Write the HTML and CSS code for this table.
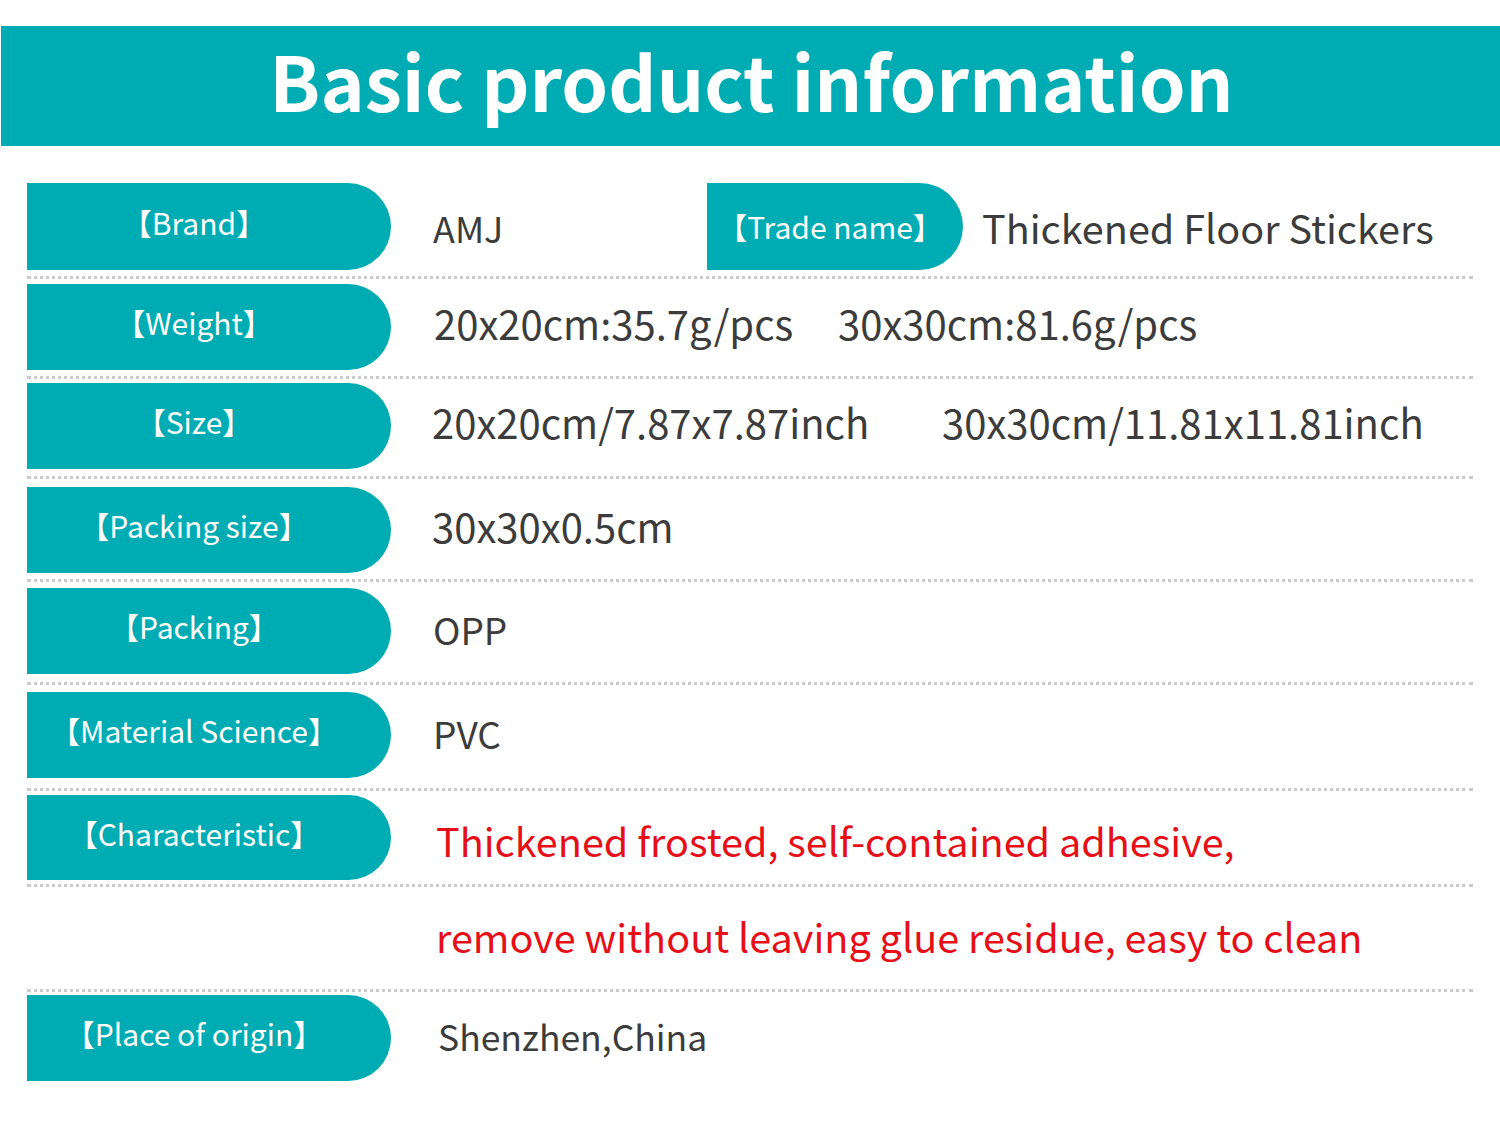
FILE: index.html
```html
<!DOCTYPE html>
<html>
<head>
<meta charset="utf-8">
<link rel="stylesheet" href="styles.css">
</head>
<body>
<header class="banner"><h1 class="title">Basic product information</h1></header>
<main class="table">
  <div class="row row-87">
    <div class="pill">【Brand】</div>
    <div class="val v-amj">AMJ</div>
    <div class="pill pill-trade">【Trade name】</div>
    <div class="val v-trade">Thickened Floor Stickers</div>
  </div>
  <div class="sep sep-1"></div>
  <div class="row">
    <div class="pill">【Weight】</div>
    <div class="val v-w1">20x20cm:35.7g/pcs</div>
    <div class="val v-w2">30x30cm:81.6g/pcs</div>
  </div>
  <div class="sep sep-2"></div>
  <div class="row">
    <div class="pill">【Size】</div>
    <div class="val v-s1">20x20cm/7.87x7.87inch</div>
    <div class="val v-s2">30x30cm/11.81x11.81inch</div>
  </div>
  <div class="sep sep-3"></div>
  <div class="row">
    <div class="pill">【Packing size】</div>
    <div class="val v-ps">30x30x0.5cm</div>
  </div>
  <div class="sep sep-4"></div>
  <div class="row">
    <div class="pill">【Packing】</div>
    <div class="val v-small">OPP</div>
  </div>
  <div class="sep sep-5"></div>
  <div class="row">
    <div class="pill">【Material Science】</div>
    <div class="val v-small">PVC</div>
  </div>
  <div class="sep sep-6"></div>
  <div class="row row-85">
    <div class="pill">【Characteristic】</div>
    <div class="val red">Thickened frosted, self-contained adhesive,</div>
  </div>
  <div class="sep sep-7"></div>
  <div class="row row-text">
    <div class="spacer"></div>
    <div class="val red">remove without leaving glue residue, easy to clean</div>
  </div>
  <div class="sep sep-8"></div>
  <div class="row">
    <div class="pill">【Place of origin】</div>
    <div class="val v-origin">Shenzhen,China</div>
  </div>
</main>
</body>
</html>
```
FILE: styles.css
```css
html, body {
  margin: 0;
  padding: 0;
  background: #ffffff;
  font-family: "Noto Sans CJK SC", "Noto Sans", sans-serif;
}
.banner {
  margin: 26px 0 0 1px;
  height: 120px;
  background: #00acb3;
  display: flex;
  align-items: center;
  justify-content: center;
}
.title {
  margin: 0;
  color: #ffffff;
  font-size: 75px;
  font-weight: 700;
  line-height: 1;
  padding-bottom: 14px;
  padding-left: 2px;
}
.table {
  margin: 37px 27px 0 27px;
  width: 1446px;
}
.row {
  display: flex;
  align-items: center;
  height: 86px;
}
.row .pill { height: 100%; }
.row-87 { height: 87px; }
.row-85 { height: 85px; }
.row-text { height: 100px; }
.spacer { width: 364px; flex: none; }
.sep {
  height: 0;
  border-top: 3px dotted #cbcbcb;
  margin: 6px 0 5px 0;
}
.sep-1 { margin: 6px 0 5px 0; }
.sep-2 { margin: 6px 0 4px 0; }
.sep-3 { margin: 7px 0 8px 0; }
.sep-4 { margin: 6px 0 6px 0; }
.sep-5 { margin: 8px 0 7px 0; }
.sep-6 { margin: 10px 0 4px 0; }
.sep-7 { margin: 4px 0 0 0; }
.sep-8 { margin: 2px 0 3px 0; }
.pill {
  flex: none;
  width: 364px;
  box-sizing: border-box;
  padding-right: 30px;
  background: #00acb3;
  color: #ffffff;
  border-radius: 0 44px 44px 0;
  display: flex;
  align-items: center;
  justify-content: center;
  font-size: 30px;
  padding-bottom: 10px;
}
.pill-trade {
  width: 256px;
  padding-right: 10px;
  padding-bottom: 2px;
}
.val {
  flex: none;
  color: #3c3c3c;
  font-size: 40px;
  margin-left: 42px;
  white-space: nowrap;
  padding-bottom: 9px;
}
.v-amj { font-size: 36px; width: 274px; margin-left: 42px; padding-bottom: 0; }
.v-trade { margin-left: 19px; font-size: 39.6px; padding-bottom: 0; }
.v-w1 { width: 362px; margin-left: 43px; }
.v-w2 { margin-left: 42px; }
.v-s1 { width: 468px; margin-left: 41px; }
.v-s2 { margin-left: 42px; }
.v-ps { margin-left: 41px; }
.v-small { font-size: 37px; margin-left: 42px; padding-bottom: 4px; }
.red { color: #e60f17; margin-left: 45px; font-size: 39.6px; padding-bottom: 0; padding-top: 4px; }
.row-text .red { padding-top: 0; padding-bottom: 4px; }
.v-origin { font-size: 35.5px; margin-left: 47px; padding-bottom: 6px; }
```
